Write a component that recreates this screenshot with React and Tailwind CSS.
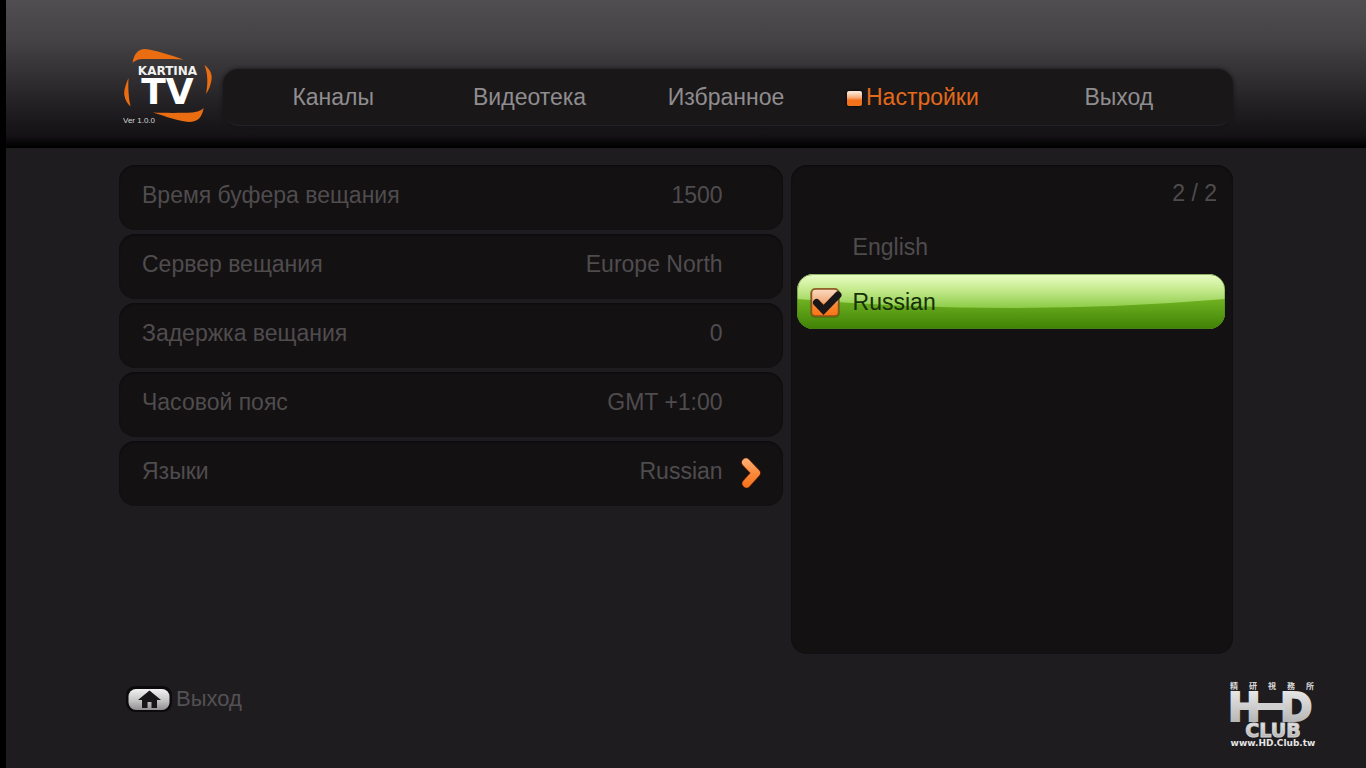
import { useState } from "react";

const NAV = ["Каналы", "Видеотека", "Избранное", "Настройки", "Выход"];
const LANGUAGES = ["English", "Russian"];

function KartinaLogo() {
  return (
    <svg viewBox="0 0 92 84" className="block h-[84px] w-[92px]" role="img" aria-label="Kartina TV">
      <g fill="#ea6d12">
        <path d="M10.500 18 C12 9 16 4 23 4 C33 5 48 10 61.500 14.500 C45 14 30 14 22 14 C16 14 13 15.500 10.500 18Z" />
        <path d="M82.500 20 C88 24 90.500 29 89.500 35 C88.500 40 87 45 84 49 C86 39 86 29 82.500 20Z" />
        <path d="M6.500 33 C3.500 40 1.500 46 2.500 51 C3.200 55 5.500 59 8.500 61.500 C6.500 53 6 43 6.500 33Z" />
        <path d="M31 67.500 C42 68 60 68 70 67.500 C76 67 79.500 65 81.700 63 C80 72 76 77 67 77 C57 76.500 44 71.500 31 67.500Z" />
      </g>
      <text x="45.500" y="30" textAnchor="middle" fontFamily="DejaVu Sans, sans-serif" fontWeight="700" fontSize="12" fill="#f1f1f1">KARTINA</text>
      <text x="45.500" y="59" textAnchor="middle" fontFamily="DejaVu Sans, sans-serif" fontWeight="700" fontSize="36" fill="#ffffff">TV</text>
    </svg>
  );
}

function ClubLogo() {
  return (
    <svg viewBox="0 0 88 68" className="block h-[68px] w-[88px]" role="img" aria-label="HD Club">
      <defs>
        <linearGradient id="steel" x1="0" y1="0" x2="0" y2="1">
          <stop offset="0" stopColor="#f0f0f0" />
          <stop offset="1" stopColor="#a9a9a9" />
        </linearGradient>
      </defs>
      <g fontFamily="Noto Sans CJK TC, sans-serif" fontWeight="700" fontSize="8" fill="#d8d8d8">
        <text x="1" y="10">精</text>
        <text x="20" y="10">研</text>
        <text x="39" y="10">視</text>
        <text x="58" y="10">務</text>
        <text x="77" y="10">所</text>
      </g>
      <g fontFamily="DejaVu Sans, sans-serif" fontWeight="700" fontSize="39" fill="url(#steel)" stroke="url(#steel)" strokeWidth="2">
        <text x="-1" y="42">H</text>
        <text x="51" y="42">D</text>
      </g>
      <rect x="28" y="24" width="28" height="7" fill="#d0d0d0" />
      <text x="44" y="58" textAnchor="middle" fontFamily="DejaVu Sans, sans-serif" fontWeight="700" fontSize="19" fill="url(#steel)" stroke="#cfcfcf">CLUB</text>
      <text x="44" y="67" textAnchor="middle" fontFamily="DejaVu Sans, sans-serif" fontWeight="700" fontSize="9" fill="#e4e4e4">www.HD.Club.tw</text>
    </svg>
  );
}

function Chevron() {
  return (
    <svg viewBox="0 0 24 34" className="h-[34px] w-6" aria-hidden="true">
      <defs>
        <linearGradient id="arrow" gradientUnits="userSpaceOnUse" x1="0" y1="3" x2="0" y2="31">
          <stop offset="0" stopColor="#ffb077" />
          <stop offset="0.5" stopColor="#fb8a3c" />
          <stop offset="1" stopColor="#f4731c" />
        </linearGradient>
      </defs>
      <path d="M7 6.500 L17 17 L7.500 27.500" fill="none" stroke="#5a1c06" strokeWidth="9.500" strokeLinecap="round" strokeLinejoin="round" />
      <path d="M7 6.500 L17 17 L7.500 27.500" fill="none" stroke="url(#arrow)" strokeWidth="8" strokeLinecap="round" strokeLinejoin="round" />
    </svg>
  );
}

function CheckMark() {
  return (
    <svg viewBox="0 0 36 36" className="h-9 w-9" aria-hidden="true">
      <defs>
        <linearGradient id="box" x1="0" y1="0" x2="0" y2="1">
          <stop offset="0" stopColor="#fbdcc4" />
          <stop offset="0.48" stopColor="#f3aa78" />
          <stop offset="0.55" stopColor="#f68b3a" />
          <stop offset="1" stopColor="#fb7413" />
        </linearGradient>
      </defs>
      <rect x="3" y="4" width="30" height="30" rx="5" fill="#3d5a10" opacity="0.45" />
      <rect x="4.500" y="5" width="27" height="27" rx="4" fill="url(#box)" stroke="#93501a" strokeWidth="1.500" />
      <path d="M9.500 18.500 L16.500 26 L31 11" fill="none" stroke="#1b1618" strokeWidth="7" strokeLinecap="round" strokeLinejoin="miter" />
    </svg>
  );
}

function RowGloss() {
  return (
    <svg
      viewBox="0 0 430 55"
      preserveAspectRatio="none"
      className="absolute inset-0 h-full w-full"
      aria-hidden="true"
    >
      <defs>
        <linearGradient id="shade" gradientUnits="userSpaceOnUse" x1="0" y1="25" x2="0" y2="55">
          <stop offset="0" stopColor="#70b222" />
          <stop offset="1" stopColor="#3f8205" />
        </linearGradient>
      </defs>
      <path d="M0 25 Q215 43 430 25 V55 H0Z" fill="url(#shade)" />
      <rect x="0.500" y="0.500" width="429" height="54" rx="15" fill="none" stroke="#4c7d1c" strokeOpacity="0.6" />
    </svg>
  );
}

function HomeKey() {
  return (
    <svg viewBox="0 0 48 28" className="h-7 w-12" aria-hidden="true">
      <defs>
        <linearGradient id="key" x1="0" y1="0" x2="0" y2="1">
          <stop offset="0" stopColor="#f2f2f2" />
          <stop offset="0.5" stopColor="#c9c9c9" />
          <stop offset="1" stopColor="#8f8f8f" />
        </linearGradient>
      </defs>
      <rect x="0" y="1" width="46" height="26" rx="9" fill="#0c0a0c" />
      <rect x="2.500" y="4" width="41" height="21" rx="7.500" fill="url(#key)" />
      <path d="M23.500 5.500 L35 15 H31 V23 H25.500 V17 H21.500 V23 H16 V15 H12Z" fill="#171517" />
    </svg>
  );
}

function SettingRow({ label, value, arrow, onClick }) {
  return (
    <button
      type="button"
      onClick={onClick}
      className="flex h-[65px] w-full items-center rounded-2xl bg-[#141113] pr-[18px] pb-[6px] pl-[23px] text-left text-[23px] leading-8 text-[#4f4c4e] shadow-[inset_0_1px_2px_#0c0a0c]"
    >
      <span className="grow">{label}</span>
      <span>{value}</span>
      <span className="ml-4 flex w-[26px] items-center pt-1">{arrow && <Chevron />}</span>
    </button>
  );
}

export default function App() {
  const [page, setPage] = useState("Настройки");
  const [language, setLanguage] = useState("Russian");

  return (
    <div className="flex min-h-screen flex-col border-l-6 border-black bg-[#1f1c1f] font-['Liberation_Sans',Arial,sans-serif]">
      <header className="flex h-[148px] items-start border-b-2 border-black bg-[linear-gradient(#504e50_0%,#444245_28%,#2d2b2d_58%,#1c1a1c_80%,#141214_93%,#030203_100%)] pr-[133px] pl-[116px]">
        <div className="mt-[45px] w-[101px] shrink-0">
          <KartinaLogo />
          <p className="-mt-[14px] pl-px text-[8px] leading-3 text-[#d5d5d5]">Ver 1.0.0</p>
        </div>
        <nav className="mt-[69px] grid h-[57px] grow grid-cols-5 items-center rounded-2xl border-b border-[#242124] bg-[#1a1719] pr-4 pl-3 shadow-[0_0_4px_#141214]">
          {NAV.map((item) => (
            <a
              key={item}
              href="#"
              onClick={(e) => {
                e.preventDefault();
                setPage(item);
              }}
              aria-current={page === item ? "page" : undefined}
              className="group relative justify-self-center text-[23px] leading-8 text-[#8f8d8f] aria-[current=page]:text-[#e26a1a]"
            >
              <span className="absolute top-[10px] right-full mr-1 hidden h-[15px] w-[15px] rounded-xs bg-linear-to-b from-[#fbe3d2] from-10% via-[#f5a873] via-45% to-[#f4731a] to-60% shadow-[0_0_3px_#000] group-aria-[current=page]:block" />
              {item}
            </a>
          ))}
        </nav>
      </header>

      <main className="grid grid-cols-[3fr_2fr] gap-2 pt-[17px] pr-[133px] pl-[113px]">
        <section className="flex flex-col gap-1">
          <SettingRow label="Время буфера вещания" value="1500" />
          <SettingRow label="Сервер вещания" value="Europe North" />
          <SettingRow label="Задержка вещания" value="0" />
          <SettingRow label="Часовой пояс" value="GMT +1:00" />
          <SettingRow label="Языки" value={language} arrow />
        </section>

        <section className="min-h-[489px] rounded-2xl bg-[#141113] px-[6px] text-[23px] leading-8 text-[#4f4c4e] shadow-[inset_0_1px_2px_#0c0a0c]">
          <p className="flex h-[54px] items-center justify-end pt-[2px] pr-[10px]">
            {LANGUAGES.indexOf(language) + 1} / {LANGUAGES.length}
          </p>
          {LANGUAGES.map((name) => (
            <label
              key={name}
              className="relative mr-[2px] flex h-[55px] cursor-pointer items-center overflow-hidden rounded-2xl pl-[10px] has-checked:bg-linear-to-b has-checked:from-[#ecfdc6] has-checked:via-[#c3e98a] has-checked:via-30% has-checked:to-[#86c83c] has-checked:to-65% has-checked:text-[#16300a]"
            >
              <input
                type="radio"
                name="language"
                checked={language === name}
                onChange={() => setLanguage(name)}
                className="sr-only"
              />
              {language === name && <RowGloss />}
              <span className="relative mr-[10px] flex h-9 w-9 items-center">
                {language === name && <CheckMark />}
              </span>
              <span className="relative">{name}</span>
            </label>
          ))}
        </section>
      </main>

      <footer className="flex grow items-start justify-between pt-[25px] pr-[49px] pl-[120px]">
        <button type="button" className="mt-[6px] flex items-center gap-[2px] text-[22px] leading-7 text-[#535153]">
          <HomeKey />
          Выход
        </button>
        <ClubLogo />
      </footer>
    </div>
  );
}
